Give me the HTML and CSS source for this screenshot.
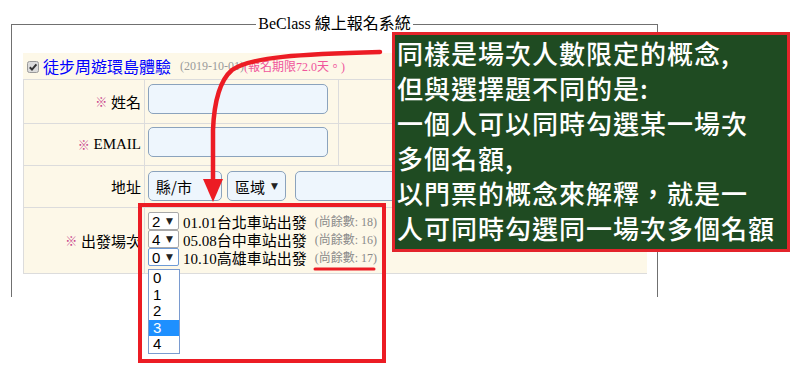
FILE: index.html
```html
<!DOCTYPE html>
<html lang="zh-Hant">
<head>
<meta charset="utf-8">
<title>BeClass 線上報名系統</title>
<link rel="stylesheet" href="styles.css">
</head>
<body>
<div class="stage">
  <div class="frame">
    <div class="frame-head">
      <span class="frame-line frame-line-l"></span>
      <span class="legend">BeClass 線上報名系統</span>
      <span class="frame-line frame-line-r"></span>
    </div>
    <div class="frame-body">
      <div class="form">
        <div class="form-title">
          <svg class="chk" width="12" height="12" viewBox="0 0 12 12"><rect x="0.5" y="0.5" width="11" height="11" rx="2" fill="#dcdcdc" stroke="#9a9a9a"/><path d="M2.8 6.2 L5 8.6 L9.4 3.4" fill="none" stroke="#333" stroke-width="2"/></svg>
          <span class="event">徒步周遊環島體驗</span>
          <span class="date">(2019-10-01)</span><span class="deadline">(報名期限72.0天。)</span>
        </div>
        <div class="row row-name">
          <div class="cell lbl"><span class="req">※</span>&nbsp;姓名</div>
          <div class="cell fld"><span class="input"></span></div>
          <div class="cell"></div>
        </div>
        <div class="row row-email">
          <div class="cell lbl"><span class="req">※</span>&nbsp;EMAIL</div>
          <div class="cell fld"><span class="input"></span></div>
          <div class="cell"></div>
        </div>
        <div class="row row-addr">
          <div class="cell lbl">地址</div>
          <div class="cell fld fld-wide">
            <span class="sel sel-city">縣/市</span>
            <span class="sel sel-area">區域 <span class="caret">▼</span></span>
            <span class="input input-street"></span>
          </div>
        </div>
        <div class="row row-slot">
          <div class="cell lbl"><span class="req">※</span>&nbsp;出發場次</div>
          <div class="cell fld fld-wide slots">
            <div class="slot"><span class="qty">2<span class="caret">▼</span></span><span class="slot-name">01.01台北車站出發</span><span class="left">(尚餘數: 18)</span></div>
            <div class="slot"><span class="qty">4<span class="caret">▼</span></span><span class="slot-name">05.08台中車站出發</span><span class="left">(尚餘數: 16)</span></div>
            <div class="slot"><span class="qty qty-focus">0<span class="caret">▼</span></span><span class="slot-name">10.10高雄車站出發</span><span class="left">(尚餘數: 17)</span></div>
          </div>
        </div>
      </div>
    </div>
  </div>

  <ul class="dropdown">
    <li>0</li>
    <li>1</li>
    <li>2</li>
    <li class="on">3</li>
    <li>4</li>
  </ul>

  <div class="callout-frame"></div>

  <svg class="arrow" width="800" height="381" viewBox="0 0 800 381">
    <path d="M380 52 C 300 54, 250 57, 232 70 C 218 82, 214 105, 213 130 L 213 182" fill="none" stroke="#ec1c24" stroke-width="4.5" stroke-linecap="round"/>
    <polygon points="203,179 223,179 213,202" fill="#ec1c24"/>
    <line x1="315" y1="269" x2="374" y2="269" stroke="#ec1c24" stroke-width="3" stroke-linecap="round"/>
  </svg>

  <div class="note">同樣是場次人數限定的概念,<br>但與選擇題不同的是:<br>一個人可以同時勾選某一場次<br>多個名額,<br>以門票的概念來解釋，就是一<br>人可同時勾選同一場次多個名額</div>
</div>
</body>
</html>
```

FILE: styles.css
```css
html, body {
  margin: 0;
  padding: 0;
  background: #fff;
}

.stage {
  position: relative;
  width: 800px;
  height: 381px;
  overflow: hidden;
  background: #fff;
  color: #000;
  font-family: "Liberation Serif", "Noto Sans CJK TC", serif;
}

/* fieldset-like frame */
.frame {
  width: 647px;
  margin: 16px 0 0 11px;
}

.frame-head {
  display: flex;
  height: 16px;
}

.frame-line {
  flex: 1;
  margin-top: 8px;
  border-top: 1px solid #707070;
}

.frame-line-l {
  border-left: 1px solid #707070;
}

.frame-line-r {
  border-right: 1px solid #707070;
}

.legend {
  font-size: 16px;
  line-height: 16px;
  padding: 0 2px;
  white-space: nowrap;
}

.frame-body {
  border-left: 1px solid #707070;
  border-right: 1px solid #707070;
  padding: 21px 10px 23px 11px;
}

/* form table */
.form {
  width: 624px;
  background: #fdf8e8;
  border-bottom: 1px solid #dcdcdc;
}

.form-title {
  height: 26px;
  display: flex;
  align-items: center;
  padding-left: 4px;
  white-space: nowrap;
}

.chk {
  display: block;
  margin-right: 4px;
  margin-top: 1px;
}

.event {
  color: #0000ff;
  font-size: 16px;
  margin-right: 9px;
}

.date {
  color: #9a9a9a;
  font-size: 12px;
}

.deadline {
  color: #f0569c;
  font-size: 12px;
}

.row {
  display: grid;
  grid-template-columns: 121px 194px 309px;
  border-top: 1px solid #dcdcdc;
}

.cell {
  border-left: 1px solid #dcdcdc;
}

.lbl {
  display: flex;
  align-items: center;
  justify-content: flex-end;
  padding-right: 3px;
  font-size: 15px;
  white-space: nowrap;
}

.req {
  color: #c8408a;
  font-size: 12px;
}

.fld {
  padding: 4px 3px 0 3px;
}

.fld-wide {
  grid-column: 2 / 4;
  display: flex;
  gap: 5px;
  padding-top: 5px;
}

.row-name { height: 43px; }
.row-email { height: 41px; }
.row-email .fld { padding-top: 3px; }
.row-addr { height: 41px; }
.row-slot { height: 65px; }

.input {
  display: block;
  width: 180px;
  height: 30px;
  box-sizing: border-box;
  border: 1px solid #8ba3bd;
  border-radius: 5px;
  background: #eef6fd;
}

.sel {
  display: flex;
  align-items: center;
  height: 30px;
  box-sizing: border-box;
  border: 1px solid #8ba3bd;
  border-radius: 5px;
  background: #eef6fd;
  font-size: 15px;
  font-family: "Noto Sans CJK TC", sans-serif;
  padding-left: 7px;
  white-space: nowrap;
}

.sel-city { width: 74px; }
.sel-area { width: 59px; gap: 6px; }
.input-street { width: 180px; margin-left: 4px; }

.caret {
  font-size: 9px;
  font-family: "DejaVu Sans", sans-serif;
  color: #222;
}

/* slot lines */
.slots {
  flex-direction: column;
  gap: 0;
  padding-top: 4px;
}

.slot {
  display: flex;
  align-items: center;
  height: 18px;
  white-space: nowrap;
}

.qty {
  display: flex;
  align-items: center;
  justify-content: space-between;
  width: 31px;
  height: 18px;
  box-sizing: border-box;
  border: 1px solid #a9a9a9;
  border-radius: 2px;
  background: #fff;
  font-family: "Liberation Sans", sans-serif;
  font-size: 15px;
  padding: 0 5px 0 3px;
  margin-right: 4px;
}

.qty-focus {
  border-color: #6d9ad6;
}

.slot-name {
  font-size: 15px;
}

.left {
  color: #8a8a8a;
  font-size: 12px;
  margin-left: 8px;
}

/* open dropdown list */
.dropdown {
  position: absolute;
  left: 148px;
  top: 269px;
  width: 32px;
  box-sizing: border-box;
  margin: 0;
  padding: 0;
  list-style: none;
  background: #fff;
  border: 1px solid #7a9bd0;
  font-family: "Liberation Sans", sans-serif;
  font-size: 15px;
}

.dropdown li {
  height: 16.6px;
  line-height: 16.6px;
  padding-left: 4px;
}

.dropdown li.on {
  background: #1e90ff;
  color: #fff;
}

/* annotations */
.callout-frame {
  position: absolute;
  left: 138px;
  top: 203px;
  width: 248px;
  height: 160px;
  box-sizing: border-box;
  border: 4px solid #ec1c24;
}

.arrow {
  position: absolute;
  left: 0;
  top: 0;
  pointer-events: none;
}

.note {
  position: absolute;
  left: 392px;
  top: 32px;
  width: 398px;
  height: 220px;
  box-sizing: border-box;
  border: 3px solid #e3242b;
  background: #1f4b22;
  color: #fff;
  font-family: "Noto Sans CJK TC", sans-serif;
  font-size: 26px;
  font-weight: 500;
  line-height: 35px;
  letter-spacing: 1px;
  padding-left: 2px;
  white-space: nowrap;
}
```
